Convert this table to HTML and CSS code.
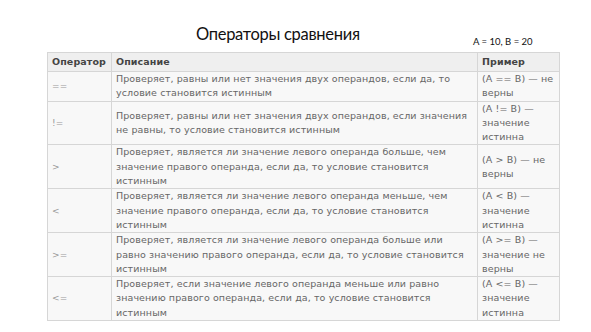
FILE: index.html
```html
<!DOCTYPE html>
<html lang="ru">
<head>
<meta charset="utf-8">
<link rel="stylesheet" href="styles.css">
</head>
<body>
<div class="slide">
  <div class="top">
    <h1 class="title">Операторы сравнения</h1>
    <div class="note">A = 10, B = 20</div>
  </div>
  <table class="ops">
    <thead>
      <tr><th class="c-op">Оператор</th><th class="c-desc">Описание</th><th class="c-ex">Пример</th></tr>
    </thead>
    <tbody>
      <tr><td class="op">==</td><td>Проверяет, равны или нет значения двух операндов, если да, то условие становится истинным</td><td>(A == B) — не верны</td></tr>
      <tr><td class="op">!=</td><td>Проверяет, равны или нет значения двух операндов, если значения не равны, то условие становится истинным</td><td>(A != B) — значение истинна</td></tr>
      <tr><td class="op">&gt;</td><td>Проверяет, является ли значение левого операнда больше, чем значение правого операнда, если да, то условие становится истинным</td><td>(A &gt; B) — не верны</td></tr>
      <tr><td class="op">&lt;</td><td>Проверяет, является ли значение левого операнда меньше, чем значение правого операнда, если да, то условие становится истинным</td><td>(A &lt; B) — значение истинна</td></tr>
      <tr><td class="op">&gt;=</td><td>Проверяет, является ли значение левого операнда больше или равно значению правого операнда, если да, то условие становится истинным</td><td>(A &gt;= B) — значение не верны</td></tr>
      <tr><td class="op">&lt;=</td><td>Проверяет, если значение левого операнда меньше или равно значению правого операнда, если да, то условие становится истинным</td><td>(A &lt;= B) — значение истинна</td></tr>
    </tbody>
  </table>
</div>
</body>
</html>
```
FILE: styles.css
```css
html, body {
  margin: 0;
  padding: 0;
  background: #ffffff;
}
.slide {
  width: 591px;
  height: 332px;
  padding: 0 0 0 47px;
  box-sizing: border-box;
}
.top {
  display: flex;
  align-items: flex-start;
  height: 52px;
}
.title {
  margin: 23px 0 0 149px;
  font-family: Lato, sans-serif;
  font-weight: 400;
  font-size: 16.5px;
  line-height: 22px;
  letter-spacing: -0.3px;
  color: #111;
  width: 277px;
}
.note {
  margin-top: 35px;
  font-family: Lato, sans-serif;
  font-size: 9.5px;
  line-height: 14px;
  color: #111;
}
.ops {
  border-collapse: collapse;
  width: 512px;
  table-layout: fixed;
  font-family: "DejaVu Sans", Verdana, sans-serif;
  font-size: 9.5px;
  letter-spacing: 0.1px;
  color: #666;
  background: #f8f8f8;
}
.ops th, .ops td {
  border: 1px solid #d6d6d6;
  text-align: left;
  vertical-align: middle;
  padding: 0 4px;
  line-height: 14.3px;
}
.ops th {
  background: #efefef;
  color: #444;
  font-weight: 700;
  height: 18px;
}
.c-op { width: 55px; }
.c-desc { width: 357px; }
.c-ex { width: 73px; }
.ops td.op {
  color: #999;
  font-size: 9px;
}
```
